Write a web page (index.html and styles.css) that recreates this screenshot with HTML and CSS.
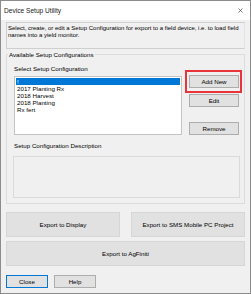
FILE: index.html
```html
<!DOCTYPE html>
<html lang="en">
<head>
  <meta charset="UTF-8">
  <title>Device Setup Utility</title>
  <link rel="stylesheet" href="styles.css">
</head>
<body>
  <div class="window">
    <div class="titlebar">
      <span class="title">Device Setup Utility</span>
      <svg class="close-x" width="5" height="5" viewBox="0 0 5 5">
        <path d="M0.5 0.5 L4.5 4.5 M4.5 0.5 L0.5 4.5" stroke="#444" stroke-width="0.7" fill="none"/>
      </svg>
    </div>

    <div class="content">
      <div class="intro">Select, create, or edit a Setup Configuration for export to a field device, i.e. to load field names into a yield monitor.</div>

      <fieldset class="group">
        <legend>Available Setup Configurations</legend>

        <div class="select-area">
          <div class="list-col">
            <div class="label">Select Setup Configuration</div>
            <ul class="listbox">
              <li class="selected">!</li>
              <li>2017 Planting Rx</li>
              <li>2018 Harvest</li>
              <li>2018 Planting</li>
              <li>Rx fert</li>
            </ul>
          </div>

          <div class="btn-col">
            <div class="highlight">
              <button class="btn">Add New</button>
            </div>
            <button class="btn btn-edit">Edit</button>
            <button class="btn btn-remove">Remove</button>
          </div>
        </div>

        <div class="label desc-label">Setup Configuration Description</div>
        <div class="desc-box"></div>
      </fieldset>

      <div class="export-row">
        <button class="btn big">Export to Display</button>
        <button class="btn big">Export to SMS Mobile PC Project</button>
      </div>
      <button class="btn big wide">Export to AgFiniti</button>

      <div class="footer">
        <button class="btn small default">Close</button>
        <button class="btn small">Help</button>
      </div>
    </div>
  </div>
</body>
</html>
```

FILE: styles.css
```css
/* Base */
* {
  box-sizing: border-box;
}

body {
  margin: 0;
  font-family: "Liberation Sans", Arial, sans-serif;
  font-size: 6.2px;
  color: #000;
  background: #fff;
}

/* Window frame */
.window {
  width: 251px;
  height: 294px;
  border: 1px solid #8c8c8c;
  background-color: #f0f0f0;
  display: flex;
  flex-direction: column;
}

.titlebar {
  height: 19px;
  background-color: #fff;
  display: flex;
  align-items: center;
  justify-content: space-between;
  padding: 0 7px 0 3px;
}

.title {
  font-size: 6.6px;
  color: #1a1a1a;
}

.content {
  padding: 2px 5px 0 5px;
}

/* Intro text box */
.intro {
  height: 27px;
  border: 1px solid #cfcfcf;
  border-right-color: #e3e3e3;
  padding: 2px 0 2px 1px;
  font-size: 6px;
  line-height: 7px;
}

/* Group box */
.group {
  margin: 2px 0 0 0;
  padding: 7px 1px 5px 7px;
  border: 1px solid #dcdcdc;
  min-width: 0;
}

.group legend {
  padding: 0 1px;
  margin-left: -6px;
  line-height: 7px;
}

.label {
  line-height: 7px;
}

.select-area {
  display: flex;
  gap: 3px;
}

.list-col {
  width: 168px;
}

.listbox {
  list-style: none;
  margin: 3.5px 0 0 0;
  padding: 1px;
  height: 59px;
  background-color: #fff;
  border: 1px solid #c4c4c4;
}

.listbox li {
  line-height: 7.2px;
  padding-left: 1px;
}

.listbox li.selected {
  background-color: #0078d7;
  color: #fff;
}

.btn-col {
  display: flex;
  flex-direction: column;
  align-items: flex-start;
  padding-top: 4.5px;
}

.highlight {
  border: 2px solid #e8353b;
  padding: 3px 1px 3px 2px;
}

/* Buttons */
.btn {
  font-family: inherit;
  font-size: 6.2px;
  color: #000;
  background-color: #e1e1e1;
  border: 1px solid #adadad;
  padding: 0;
  margin: 0;
  width: 50px;
  height: 13px;
}

.btn-edit {
  margin: 1px 0 0 4px;
}

.btn-remove {
  margin: 15px 0 0 4px;
}

.desc-label {
  margin-top: 7.5px;
}

.desc-box {
  margin: 6.5px 0 0 -1px;
  width: 227px;
  height: 42px;
  border: 1px solid #dadada;
}

.export-row {
  display: flex;
  gap: 11px;
  margin: 8px -1px 0 0;
}

.btn.big {
  width: 114px;
  height: 25px;
  border-color: #d6d6d6;
}

.btn.big.wide {
  width: 239px;
  margin-top: 4px;
}

.footer {
  display: flex;
  gap: 6px;
  margin-top: 9px;
}

.btn.small {
  width: 42px;
}

.btn.default {
  border-color: #0078d7;
}
```
